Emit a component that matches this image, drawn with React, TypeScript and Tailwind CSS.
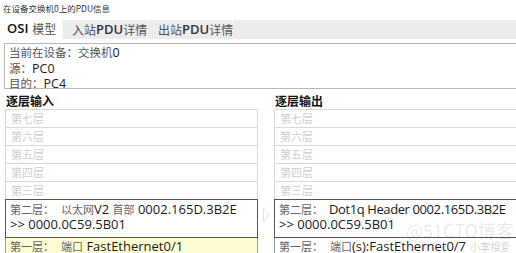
import React from "react";

const CJK = "font-['Noto_Sans_CJK_SC',sans-serif]";

function Faint({ label }: { label: string }) {
  return (
    <div className={`h-[18px] border-x border-t border-[#d9d9d9] pl-[5px] text-[11px] leading-[17px] text-[#cfcfcf] ${CJK}`}>
      {label}
    </div>
  );
}

function Column({
  title,
  line1,
  line2,
  line3,
  yellow,
}: {
  title: string;
  line1: React.ReactNode;
  line2: string;
  line3: React.ReactNode;
  yellow: boolean;
}) {
  return (
    <div className="flex flex-col">
      <div className={`h-[20px] pl-[1px] pt-[2px] text-[12px] leading-[20px] font-bold text-[#111] ${CJK}`}>{title}</div>
      <Faint label="第七层" />
      <Faint label="第六层" />
      <Faint label="第五层" />
      <Faint label="第四层" />
      <Faint label="第三层" />
      <div className="h-[39px] border border-[#555] pl-[4px] pt-[2px] text-[13px] leading-[15px] text-[#1a1a1a]">
        <div className="whitespace-nowrap">{line1}</div>
        <div className="whitespace-nowrap">{line2}</div>
      </div>
      <div
        className={`h-[20px] border-x border-[#9a9a9a] pl-[4px] text-[13px] leading-[16px] text-[#1a1a1a] whitespace-nowrap ${
          yellow ? "bg-[#fdfcd2]" : "bg-white"
        }`}
      >
        {line3}
      </div>
    </div>
  );
}

function C({ children }: { children: React.ReactNode }) {
  return <span className={`text-[11px] text-[#666] ${CJK}`}>{children}</span>;
}

export default function App() {
  return (
    <div className="relative h-[253px] w-[516px] overflow-hidden bg-white font-['Open_Sans','Noto_Sans_CJK_SC',sans-serif] text-[#222]">
      <div className={`h-[18px] pl-[3px] pt-[3px] text-[8.5px] leading-[10px] text-[#333] ${CJK}`}>
        在设备交换机0上的PDU信息
      </div>
      <div className="flex h-[21px]">
        <div className="flex w-[62px] shrink-0 items-center whitespace-nowrap pl-[7px] text-[13px] text-[#111]">
          <span className="font-semibold">OSI</span>
          <span className={`ml-[4px] text-[12px] text-[#555] ${CJK}`}>模型</span>
        </div>
        <div className="mt-[2px] flex flex-1 bg-[#ececec]">
          <div className="flex w-[85px] shrink-0 items-center whitespace-nowrap border-l border-[#f7f7f7] pl-[9px] text-[13px] text-[#555]">
            <span className={`text-[12px] ${CJK}`}>入站</span>
            <span className="font-semibold text-[#333]">PDU</span>
            <span className={`text-[12px] ${CJK}`}>详情</span>
          </div>
          <div className="flex w-[86px] shrink-0 items-center whitespace-nowrap border-x border-[#f7f7f7] pl-[10px] text-[13px] text-[#555]">
            <span className={`text-[12px] ${CJK}`}>出站</span>
            <span className="font-semibold text-[#333]">PDU</span>
            <span className={`text-[12px] ${CJK}`}>详情</span>
          </div>
        </div>
      </div>
      <div className="h-[4px]" />
      <div className="ml-[4px] mr-[-6px] h-[46px] border border-[#b8b8b8] pl-[4px] pt-[1px] text-[12.5px] leading-[14.5px] text-[#222]">
        <div>
          <span className={`text-[11.5px] text-[#555] ${CJK}`}>当前在设备：交换机</span>0
        </div>
        <div>
          <span className={`text-[11.5px] text-[#555] ${CJK}`}>源：</span>PC0
        </div>
        <div>
          <span className={`text-[11.5px] text-[#555] ${CJK}`}>目的：</span>PC4
        </div>
      </div>
      <div className="flex">
        <div className="ml-[5px] w-[253px] shrink-0">
          <Column
            title="逐层输入"
            line1={
              <>
                <C>第二层：</C>
                <span className="ml-[7px]"></span>
                <C>以太网</C>V2 <C>首部</C> 0002.165D.3B2E
              </>
            }
            line2=">> 0000.0C59.5B01"
            line3={
              <>
                <C>第一层：</C>
                <span className="ml-[7px]"></span>
                <C>端口</C> FastEthernet0/1
              </>
            }
            yellow
          />
        </div>
        <div className="flex w-[16px] shrink-0 justify-center pt-[118px]">
          <svg width="8" height="16" viewBox="0 0 8 16">
            <path d="M1.5 1 L6.5 8 L1.5 15 Z" fill="none" stroke="#e2e2e2" strokeWidth="1" />
          </svg>
        </div>
        <div className="mr-[-6px] min-w-0 flex-1">
          <Column
            title="逐层输出"
            line1={
              <>
                <C>第二层：</C>
                <span className="ml-[6px] tracking-[-0.4px]">Dot1q Header 0002.165D.3B2E</span>
              </>
            }
            line2=">> 0000.0C59.5B01"
            line3={
              <>
                <C>第一层：</C>
                <span className="ml-[7px]"></span>
                <C>端口</C>(s):FastEthernet0/7
              </>
            }
            yellow={false}
          />
        </div>
      </div>
      <div className={`pointer-events-none absolute left-[406px] top-[220px] text-[18px] leading-[20px] text-black/10 ${CJK}`}>
        @51CTO博客
      </div>
      <div className={`pointer-events-none absolute left-[470px] top-[241px] text-[10px] leading-[12px] text-black/20 ${CJK}`}>
        小李相爱秋
      </div>
    </div>
  );
}
